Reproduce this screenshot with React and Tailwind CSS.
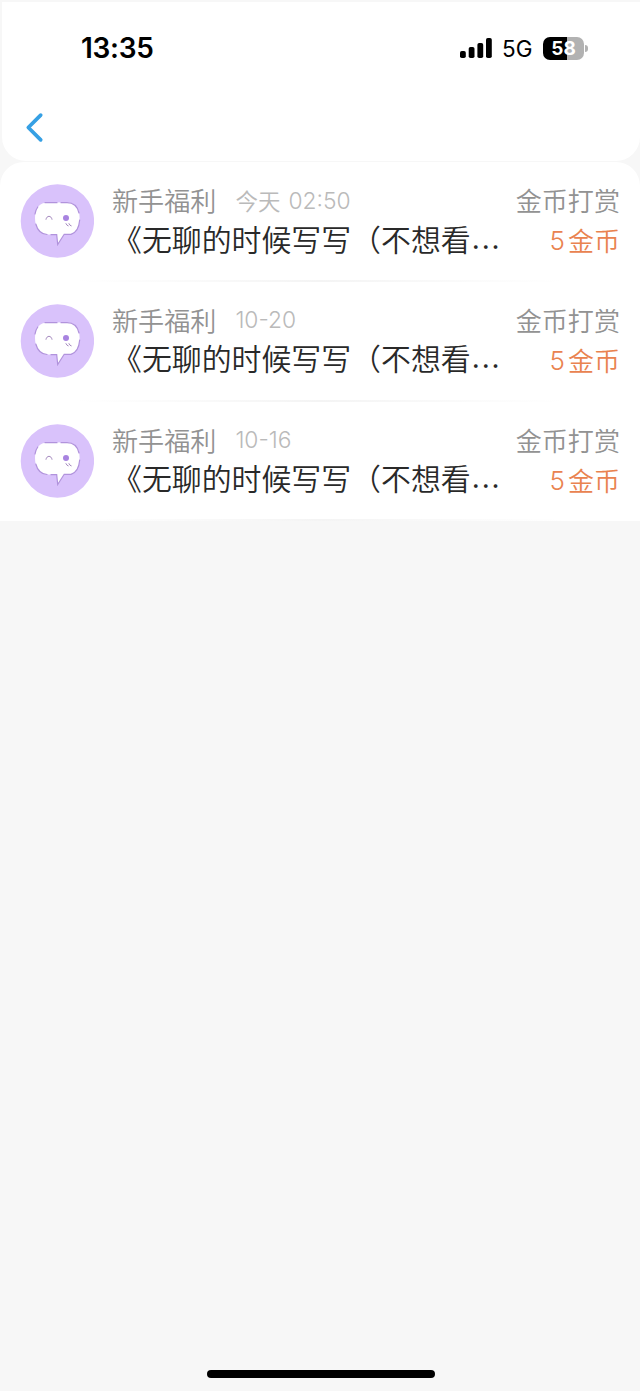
import { ChevronLeft } from "lucide-react";

const StatusBar = () => {
  return (
    <div className="flex h-[92px] items-center justify-between pr-[52px] pl-[79px]">
      <span className="font-['Inter',sans-serif] text-[28px] leading-none font-semibold tracking-[-0.3px] text-black">
        13:35
      </span>
      <div className="flex items-center">
        <svg width="32" height="20" viewBox="0 0 32 20" className="mr-[10px]">
          <rect x="0" y="13" width="5.8" height="7" rx="1.8" />
          <rect x="8.7" y="9" width="5.8" height="11" rx="1.8" />
          <rect x="17.4" y="5" width="5.8" height="15" rx="1.8" />
          <rect x="26" y="0" width="5.8" height="20" rx="1.8" />
        </svg>
        <span className="w-[31px] pt-[2px] font-['Inter',sans-serif] text-[22.5px] leading-none font-normal text-black">
          5G
        </span>
        {/* BATTERY */}
        <div className="ml-[10px] flex h-[23px] w-[41px] items-center justify-center rounded-[7px] bg-[linear-gradient(to_right,#000_58%,#b2b2b2_58%)]">
          <span className="font-['Inter',sans-serif] text-[19px] leading-none font-bold text-white">
            58
          </span>
        </div>
        <div className="ml-px h-[7px] w-[3px] rounded-r-full bg-[#b2b2b2]"></div>
      </div>
    </div>
  );
};

const Avatar = () => {
  return (
    <svg
      viewBox="0 0 74 74"
      className="h-[74px] w-[74px] flex-shrink-0"
      fill="none"
    >
      <circle cx="37.4" cy="37" r="36.7" fill="#d9c2fb" />
      {/* speech bubble */}
      <path
        d="M28 18.5H47C55 18.5 59.6 24 59.6 34S55 50.5 48 50.5H44.2L37.7 60.5L36.7 50.5H28C19.5 50.5 15 44 15 34S19.5 18.5 28 18.5Z"
        fill="#fff"
      />
      <path
        d="M25 18.7H37M41 18.7H47C53.5 18.7 57.5 22.5 59 29M59.7 36C59 44 55.5 49 51 50.3H44.2L37.7 60.5L36.7 50.7H31M27 50.5C21 50 17.5 46.5 15.8 40M15 30C15.3 27.5 16.3 25 17.8 23"
        stroke="#b193dc"
        strokeWidth="1.2"
        strokeLinecap="round"
      />
      {/* face */}
      <path
        d="M26 35.3C26.6 31.2 31.4 31.2 32 35.3"
        stroke="#a58abf"
        strokeWidth="1"
        strokeLinecap="round"
      />
      <circle cx="46" cy="34" r="3" fill="#a883e0" />
      <path
        d="M46 39.6L47 41.2L48.2 41.8M49 39.6L50 41.2L51.2 41.8"
        stroke="#a58abf"
        strokeWidth="1"
        strokeLinecap="round"
      />
    </svg>
  );
};

const Record = ({ record }) => {
  return (
    <div className="relative flex h-[119.8px] pt-[22px] pr-[20px] pl-[20px]">
      <Avatar />
      <div className="ml-[18px] min-w-0 flex-1">
        <div className="flex h-[32px] items-center justify-between">
          <div className="flex items-center">
            <span className="text-[26.1px] leading-none text-[#929292]">
              {record.name}
            </span>
            <span className="ml-[19px] flex items-center text-[#bababa]">
              {record.day && (
                <span className="mr-[8px] text-[22.5px] leading-none">
                  {record.day}
                </span>
              )}
              <span className="pt-[2px] font-['Inter',sans-serif] text-[22.8px] leading-none">
                {record.time}
              </span>
            </span>
          </div>
          <span className="text-[26.1px] leading-none text-[#929292]">
            {record.type}
          </span>
        </div>
        <div className="flex h-[46px] items-center justify-between">
          <span className="pb-[3px] text-[29.9px] leading-none whitespace-nowrap text-[#292929]">
            {record.title}
            <span className="ml-px align-[2px] tracking-[1.9px]">...</span>
          </span>
          <span className="flex items-center pt-[2px] text-[26px] leading-none text-[#e98350]">
            <span className="mr-[3px] pt-[2px] font-['Inter',sans-serif] text-[26px]">
              {record.amount}
            </span>
            金币
          </span>
        </div>
      </div>
      {/* hairline that fades out at both ends */}
      <div className="absolute inset-x-0 bottom-0 h-[2px] bg-[linear-gradient(to_right,transparent_12%,#f4f4f4_50%,transparent_88%)]"></div>
    </div>
  );
};

const App = () => {
  const records = [
    { day: "今天", time: "02:50" },
    { time: "10-20" },
    { time: "10-16" },
  ].map((item) => ({
    ...item,
    name: "新手福利",
    type: "金币打赏",
    title: "《无聊的时候写写（不想看",
    amount: 5,
  }));

  return (
    <div className="flex h-[1391px] w-[640px] flex-col overflow-hidden bg-[#f7f7f7] pt-[2px] font-['Noto_Sans_CJK_SC',sans-serif] font-[350]">
      <header className="ml-[2px] h-[159px] rounded-b-[24px] bg-white">
        <StatusBar />
        <button className="ml-[16px] block pt-[14px]" aria-label="返回">
          <ChevronLeft
            className="h-[39px] w-[33px] text-[#36a0e4]"
            strokeWidth={1.8}
            viewBox="4 3 16 18"
          />
        </button>
      </header>

      <main className="mt-px rounded-t-[24px] bg-white">
        {records.map((record) => (
          <Record key={record.time} record={record} />
        ))}
      </main>

      <div className="mr-[205px] mt-auto mb-[13px] ml-auto h-[8px] w-[228px] flex-shrink-0 rounded-full bg-black"></div>
    </div>
  );
};

export default App;
